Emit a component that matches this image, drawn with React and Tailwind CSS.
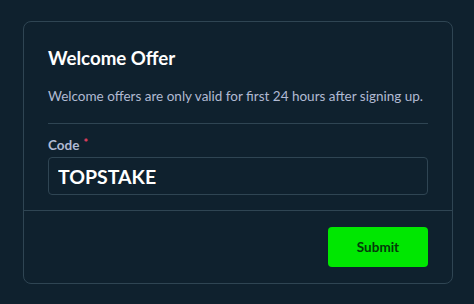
import React, { useState } from 'react';

export default function App() {
  const [code, setCode] = useState('TOPSTAKE');

  return (
    <div className="min-h-screen bg-[#0f212e] pt-[21px] pl-[23px] pr-[21px] font-['Lato',sans-serif]">
      {/* Offer card */}
      <div className="w-[430px] rounded-lg border border-[#2f4553] bg-[#0f212e]">
        <div className="px-6 pt-6 pb-[15px]">
          <h2 className="text-[18.7px] leading-6 font-bold text-white">Welcome Offer</h2>
          <p className="mt-4 text-[13.5px] leading-5 text-[#b1bad3]">
            Welcome offers are only valid for first 24 hours after signing up.
          </p>
          <div className="mt-[17px] border-t border-[#2f4553]" />
          <label className="mt-[11px] flex items-center gap-1 text-[13.5px] leading-5 font-bold text-[#b1bad3]">
            Code <span className="text-[#ed4163] -mt-1 text-[11px]">*</span>
          </label>
          <input
            value={code}
            onChange={(e) => setCode(e.target.value)}
            className="mt-[2px] h-[38px] w-full rounded border border-[#2f4553] bg-[#0f212e] px-[9px] text-[19.5px] font-bold text-white outline-none"
          />
        </div>
        <div className="flex justify-end border-t border-[#2f4553] px-6 py-4">
          <button className="h-10 w-[100px] rounded bg-[#00e701] text-[13.5px] font-bold text-[#05380a]">
            Submit
          </button>
        </div>
      </div>
    </div>
  );
}
